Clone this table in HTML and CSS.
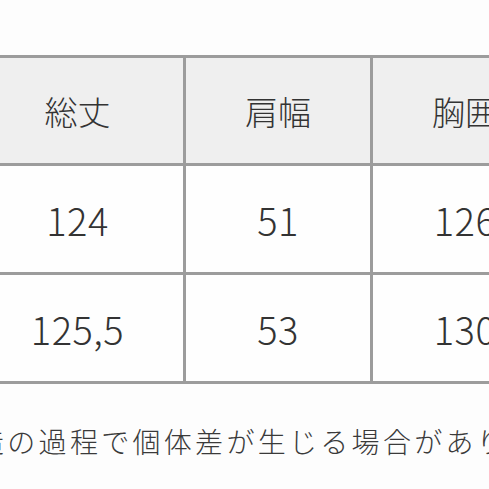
FILE: index.html
```html
<!DOCTYPE html>
<html lang="ja">
<head>
<meta charset="utf-8">
<link rel="stylesheet" href="styles.css">
</head>
<body>
<div class="page">
  <table class="size-table">
    <colgroup>
      <col class="c1">
      <col class="c2">
      <col class="c3">
    </colgroup>
    <tr class="head">
      <th>総丈</th>
      <th>肩幅</th>
      <th>胸囲</th>
    </tr>
    <tr class="row">
      <td>124</td>
      <td>51</td>
      <td>126</td>
    </tr>
    <tr class="row">
      <td>125,5</td>
      <td>53</td>
      <td>130</td>
    </tr>
  </table>
  <p class="note">造の過程で個体差が生じる場合があります。</p>
</div>
</body>
</html>
```

FILE: styles.css
```css
html, body {
  margin: 0;
  padding: 0;
  background: #fdfdfd;
  overflow: hidden;
  width: 489px;
  height: 489px;
}
.page {
  padding-top: 55px;
  width: 489px;
  overflow: hidden;
  font-family: "Noto Sans CJK JP", "Noto Sans", sans-serif;
  color: #333;
}
.size-table {
  border-collapse: collapse;
  margin-left: -31px;
  table-layout: fixed;
  width: 588px;
}
.c1 { width: 214px; }
.c2 { width: 187px; }
.c3 { width: 187px; }
.size-table th,
.size-table td {
  border: 3px solid #9c9c9c;
  text-align: center;
  font-weight: 300;
  padding: 0;
  overflow: hidden;
  white-space: nowrap;
}
.size-table th {
  background: #efefef;
  height: 105px;
  font-size: 33px;
}
.size-table td {
  background: #fefefe;
  height: 106px;
  font-size: 38px;
  letter-spacing: 0.5px;
}
.note {
  margin: 37px 0 0 -24px;
  font-size: 28px;
  letter-spacing: 3.3px;
  white-space: nowrap;
  color: #3a3a3a;
  font-weight: 300;
}
```
